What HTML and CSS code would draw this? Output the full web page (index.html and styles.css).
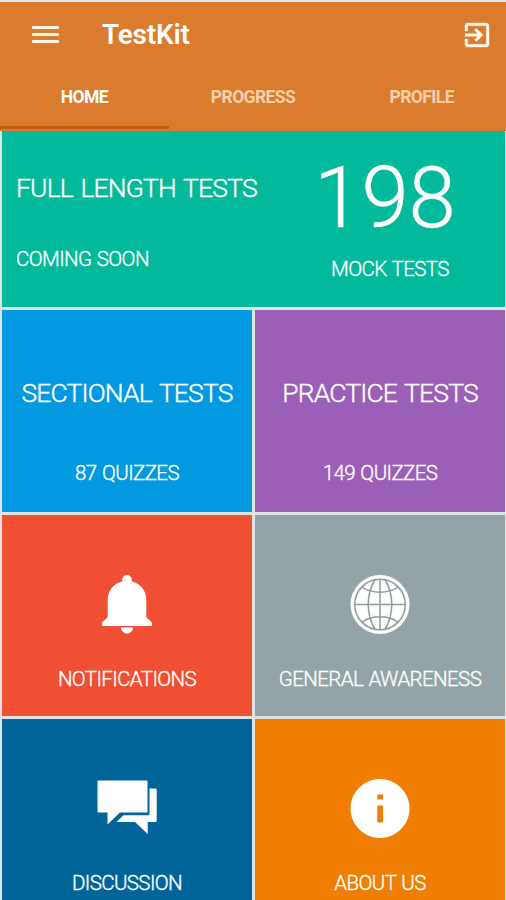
FILE: index.html
```html
<!DOCTYPE HTML>
<html>
    <head>
        <meta charset="UTF-8">
        <title>TestKit</title>
        <link rel="stylesheet" href="styles.css">
    </head>
    <body>
        <div id="wrap">
            <header class="header">
                <div class="bar">
                    <div class="menu"><i></i><i></i><i></i></div>
                    <h1>TestKit</h1>
                    <svg class="exit" viewBox="3 3 18 18">
                        <path d="M10.09 15.59L11.5 17l5-5-5-5-1.41 1.41L12.67 11H3v2h9.67l-2.58 2.59zM19 3H5c-1.11 0-2 .9-2 2v4h2V5h14v14H5v-4H3v4c0 1.1.89 2 2 2h14c1.1 0 2-.9 2-2V5c0-1.1-.9-2-2-2z"/>
                    </svg>
                </div>
                <ul class="tab">
                    <li class="active">HOME</li>
                    <li>PROGRESS</li>
                    <li>PROFILE</li>
                </ul>
            </header>
            <div class="grid">
                <div class="tile full">
                    <div class="left">
                        <h2>FULL LENGTH TESTS</h2>
                        <p>COMING SOON</p>
                    </div>
                    <div class="right">
                        <div class="num">198</div>
                        <p>MOCK TESTS</p>
                    </div>
                </div>
                <div class="tile sectional">
                    <h2>SECTIONAL TESTS</h2>
                    <p>87 QUIZZES</p>
                </div>
                <div class="tile practice">
                    <h2>PRACTICE TESTS</h2>
                    <p>149 QUIZZES</p>
                </div>
                <div class="tile notice">
                    <svg viewBox="0 0 60 60">
                        <path d="M30 0c-2.900 0-4.800 2-4.800 5v1.600C16 9 10.700 16 10.700 25v17.300L5 47.500V51h50v-3.500l-5.700-5.200V25C49.300 16 44 9 34.800 6.600V5c0-3-1.900-5-4.800-5zM23.800 52.500c.6 3.500 3 6 6.200 6s5.600-2.500 6.200-6z"/>
                    </svg>
                    <p>NOTIFICATIONS</p>
                </div>
                <div class="tile general">
                    <svg viewBox="0 0 60 60">
                        <circle cx="30" cy="29.500" r="29.500"/>
                        <g class="lines">
                            <circle cx="30" cy="29.500" r="25.300"/>
                            <path d="M30 4v51M4.500 29.500h51M25 4.500c-9 15-9 35 0 50M35 4.500c9 15 9 35 0 50M12 12c10 7 26 7 36 0M12 47c10-7 26-7 36 0"/>
                        </g>
                    </svg>
                    <p>GENERAL AWARENESS</p>
                </div>
                <div class="tile discuss">
                    <svg viewBox="0 0 60 60">
                        <path d="M1.500 1.500h48q1 0 1 1v30q0 1-1 1H23L10.500 45.500v-12h-9q-1 0-1-1v-30q0-1 1-1zM52.500 9.500h6q1.200 0 1.200 1.200v31q0 1.200-1.200 1.200h-7.800v12L38 42.900H19.500l7-6.700h25q1 0 1-1z"/>
                    </svg>
                    <p>DISCUSSION</p>
                </div>
                <div class="tile about">
                    <svg viewBox="0 0 60 60">
                        <path fill-rule="evenodd" d="M30 0a29.500 29.500 0 1 0 .01 0zM27.300 15.500h5.700v5h-5.700zM27.300 26.500h5.700v17h-5.700z"/>
                    </svg>
                    <p>ABOUT US</p>
                </div>
            </div>
        </div>
    </body>
</html>
```
FILE: styles.css
```css
body{font-family: Roboto,"Liberation Sans",sans-serif;}
body,p,h1,h2{margin:0;}
ul,li{margin:0;padding:0;list-style:none;}
#wrap{
    display: flow-root;
    overflow: hidden;
    width:506px;
    height:900px;
    background-color: #dfe4e4;
    color:#fff;
    white-space: nowrap;
}
.header{
    height:129px;
    margin-top:2px;
    background-color: #db7b2e;
}
.bar{
    display: flex;
    align-items: center;
    height:65px;
    padding:0 17px 0 32px;
}
.menu{
    width:27px;
    margin-right:43px;
}
.menu i{
    display: block;
    height:3px;
    margin-bottom:4px;
    border-radius: 1px;
    background-color: #fff4e8;
}
.menu i:last-child{
    margin-bottom:0;
}
.bar h1{
    flex:1;
    line-height: 34px;
    padding-top:1px;
    font-size: 28px;
    font-weight: 600;
    letter-spacing: -0.2px;
}
.exit{
    width:24px;
    height:24px;
    overflow: visible;
    fill:#fff8f0;
    stroke:#fff8f0;
    stroke-width: .3;
}
.tab{
    display: flex;
    height:64px;
}
.tab li{
    flex:1;
    box-sizing: border-box;
    height:62px;
    line-height: 60px;
    text-align: center;
    font-size: 17.5px;
    font-weight: 700;
    letter-spacing: -0.6px;
    color:#f8cfaa;
}
.tab li.active{
    border-bottom:3px solid #c05c0b;
    color:#fff;
}
.grid{
    display: grid;
    grid-template-columns: 250px 250px;
    grid-template-rows: 176px 202px 201px 201px;
    gap:3px;
    padding-left:2px;
}
.tile{
    display: flex;
    flex-direction: column;
    align-items: center;
}
.tile h2{
    line-height: 32px;
    font-size: 26.5px;
    font-weight: 300;
    letter-spacing: -0.85px;
    word-spacing: 2px;
    -webkit-text-stroke: 0.4px #fff;
}
.tile p{
    line-height: 26px;
    font-size: 20.5px;
    font-weight: 300;
    letter-spacing: -0.6px;
    word-spacing: 1px;
    -webkit-text-stroke: 0.35px #fff;
}
.tile svg{
    width:60px;
    height:60px;
    margin:60px 0 31px;
    fill:#fff;
}
.full{
    grid-column: span 2;
    flex-direction: row;
    align-items: flex-start;
    background-color: #02b99b;
}
.full .left{
    width:283px;
    padding:41px 0 0 14px;
}
.full .left p{
    margin-top:42px;
}
.full .right{
    width:172px;
    padding-top:17px;
    text-align: center;
}
.full .num{
    line-height: 100px;
    font-size: 85px;
    font-weight: 300;
    -webkit-text-stroke: 0.5px #fff;
}
.full .right p{
    margin-top:8px;
    padding-left:10px;
}
.sectional,
.practice{
    box-sizing: border-box;
    padding-top:67px;
}
.sectional p,
.practice p{
    margin-top:51px;
}
.sectional{background-color: #0299e0;}
.practice{background-color: #9b5fb8;}
.notice{background-color: #f04f34;}
.general{background-color: #92a4a7;}
.discuss{background-color: #02659a;}
.about{background-color: #f07e02;}
.lines{
    fill:none;
    stroke:#8c9a9c;
    stroke-width: 1.5;
}
```
